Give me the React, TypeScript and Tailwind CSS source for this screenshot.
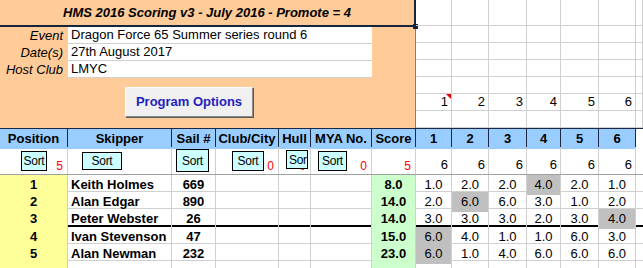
import React from "react";

const COLS = "grid grid-cols-[68px_104px_44px_63px_32px_61px_44px_36px_37px_38px_34px_38px_37px_7px]";
const GRID = "border-[#d0d0d0]";

const results = [
  { pos: "1", name: "Keith Holmes", sail: "669", score: "8.0", races: ["1.0", "2.0", "2.0", "4.0", "2.0", "1.0"], worst: 3 },
  { pos: "2", name: "Alan Edgar", sail: "890", score: "14.0", races: ["2.0", "6.0", "6.0", "3.0", "1.0", "2.0"], worst: 1 },
  { pos: "3", name: "Peter Webster", sail: "26", score: "14.0", races: ["3.0", "3.0", "3.0", "2.0", "3.0", "4.0"], worst: 5 },
  { pos: "4", name: "Ivan Stevenson", sail: "47", score: "15.0", races: ["6.0", "4.0", "1.0", "1.0", "6.0", "3.0"], worst: 0 },
  { pos: "5", name: "Alan Newman", sail: "232", score: "23.0", races: ["6.0", "1.0", "4.0", "6.0", "6.0", "6.0"], worst: 0 },
];

const headers = ["Position", "Skipper", "Sail #", "Club/City", "Hull", "MYA No.", "Score", "1", "2", "3", "4", "5", "6", ""];

function SortButton({ className, label = "Sort" }: { className: string, label?: string }) {
  return (
    <div className={`absolute flex items-center justify-center overflow-hidden whitespace-nowrap bg-[#ccffff] border border-black text-[12px] tracking-[-0.3px] text-black ${className}`}>
      {label}
    </div>
  )
}

function RedCount({ n }: { n: string }) {
  return <span className="text-[12px] leading-none text-[#ff0000]">{n}</span>
}

function InfoRow({ label, value }: { label: string, value: string }) {
  return (
    <div className="flex h-[17px]">
      <div className="w-[68px] pr-[5px] text-right italic text-[13px] leading-[17px]">{label}</div>
      <div className={`w-[304px] bg-white border-b ${GRID} pl-[3px] text-[13px] leading-[16px]`}>{value}</div>
      <div className="flex-1" />
    </div>
  )
}

export default function App() {
  return (
    <div className="w-[643px] h-[268px] overflow-hidden bg-white text-black font-['Liberation_Sans',Arial,sans-serif]">
      {/* top block */}
      <div className="flex h-[128px]">
        <div className="w-[416px] flex flex-col bg-[#ffcc99]">
          <div className="relative h-[27px] flex items-center justify-center border-b-2 border-r-2 border-[#14253d] font-bold italic text-[13px]">
            HMS 2016 Scoring v3 - July 2016 - Promote = 4
            <span className="absolute right-[-4px] bottom-[-4px] w-[5px] h-[5px] bg-[#14253d]" />
          </div>
          <div className="flex-1 flex flex-col border-r border-[#8c7c6c]">
            <InfoRow label="Event" value="Dragon Force 65 Summer series round 6" />
            <InfoRow label="Date(s)" value="27th August 2017" />
            <InfoRow label="Host Club" value="LMYC" />
            <div className="flex-1">
              <button className="ml-[125px] mt-[9px] w-[128px] h-[30px] bg-[#f0f0f0] border border-t-white border-l-white border-r-[#8a8a8a] border-b-[#8a8a8a] shadow-[1px_1px_0_#5a5a5a] text-[13px] font-bold text-[#1f1fc0]">
                Program Options
              </button>
            </div>
          </div>
        </div>
        <div className="flex-1 grid grid-cols-[36px_37px_38px_34px_38px_37px_7px] grid-rows-[26px_17px_17px_17px_17px_17px_17px]">
          {Array.from({ length: 7 * 7 }).map((_, i) => {
            const row = Math.floor(i / 7)
            const col = i % 7
            return (
              <div key={i} className={`relative flex items-center justify-end pr-[3px] border-r border-b ${GRID} text-[13px]`}>
                {row === 5 && col < 6 ? col + 1 : ""}
                {row === 5 && col === 0 && (
                  <span className="absolute top-0 right-0 w-0 h-0 border-l-[5px] border-l-transparent border-t-[5px] border-t-[#e00000]" />
                )}
              </div>
            )
          })}
        </div>
      </div>

      {/* column headings */}
      <div className={`${COLS} h-[19px] border-y border-[#1b2a44]`}>
        {headers.map((h, i) => (
          <div key={i} className={`flex items-center justify-center font-bold text-[13px] ${i < 13 ? "bg-[#99ccff] border-r border-[#1b2a44]" : "bg-white"}`}>
            {h}
          </div>
        ))}
      </div>

      {/* sort row */}
      <div className={`${COLS} h-[28px] border-b border-[#a0a0a0]`}>
        <div className={`relative flex items-end justify-end pr-[4px] pb-[2px] border-r ${GRID}`}>
          <SortButton className="left-[21px] top-[4px] w-[26px] h-[20px]" />
          <RedCount n="5" />
        </div>
        <div className={`relative border-r ${GRID}`}>
          <SortButton className="left-[14px] top-[5px] w-[40px] h-[18px]" />
        </div>
        <div className={`relative border-r ${GRID}`}>
          <SortButton className="left-[4px] top-[2px] w-[33px] h-[23px]" />
        </div>
        <div className={`relative flex items-end justify-end pr-[4px] pb-[2px] border-r ${GRID}`}>
          <SortButton className="left-[16px] top-[4px] w-[32px] h-[20px]" />
          <RedCount n="0" />
        </div>
        <div className={`relative flex items-end justify-end pr-[4px] pb-[2px] border-r ${GRID}`}>
          <RedCount n="0" />
          <SortButton className="left-[7px] top-[3px] w-[22px] h-[19px] justify-start pl-[2px]" label="Sort" />
        </div>
        <div className={`relative flex items-end justify-end pr-[4px] pb-[2px] border-r ${GRID}`}>
          <SortButton className="left-[7px] top-[4px] w-[29px] h-[20px]" />
          <RedCount n="0" />
        </div>
        <div className={`flex items-end justify-end pr-[4px] pb-[2px] border-r ${GRID}`}>
          <RedCount n="5" />
        </div>
        {[0, 1, 2, 3, 4, 5].map(i => (
          <div key={i} className={`flex items-end justify-end pr-[3px] pb-[2px] border-r ${GRID} text-[13px] leading-[14px]`}>6</div>
        ))}
        <div />
      </div>

      {/* results */}
      {results.map((r, idx) => (
        <div key={r.pos} className={`${COLS} ${idx === 2 ? "h-[18px] border-b-2 border-black" : `h-[17px] border-b ${GRID}`} text-[13px]`}>
          <div className={`flex items-center justify-center bg-[#ffff99] font-bold border-r ${GRID}`}>{r.pos}</div>
          <div className={`flex items-center pl-[3px] font-bold border-r ${GRID}`}>{r.name}</div>
          <div className={`flex items-center justify-center font-bold border-r ${GRID}`}>{r.sail}</div>
          <div className={`border-r ${GRID}`} />
          <div className={`border-r ${GRID}`} />
          <div className={`border-r ${GRID}`} />
          <div className={`flex items-center justify-center bg-[#ccffcc] font-bold border-r ${GRID}`}>{r.score}</div>
          {r.races.map((v, i) => (
            <div key={i} className={`flex items-center justify-center border-r ${GRID} ${i === r.worst ? "bg-[#c0c0c0]" : ""}`}>{v}</div>
          ))}
          <div />
        </div>
      ))}
      <div className={`${COLS} h-[17px] border-b ${GRID}`}>
        <div className={`bg-[#ffff99] border-r ${GRID}`} />
        <div className={`border-r ${GRID}`} />
        <div className={`border-r ${GRID}`} />
        <div className={`border-r ${GRID}`} />
        <div className={`border-r ${GRID}`} />
        <div className={`border-r ${GRID}`} />
        <div className={`bg-[#ccffcc] border-r ${GRID}`} />
        {[0, 1, 2, 3, 4, 5].map(i => <div key={i} className={`border-r ${GRID}`} />)}
        <div />
      </div>
    </div>
  )
}
